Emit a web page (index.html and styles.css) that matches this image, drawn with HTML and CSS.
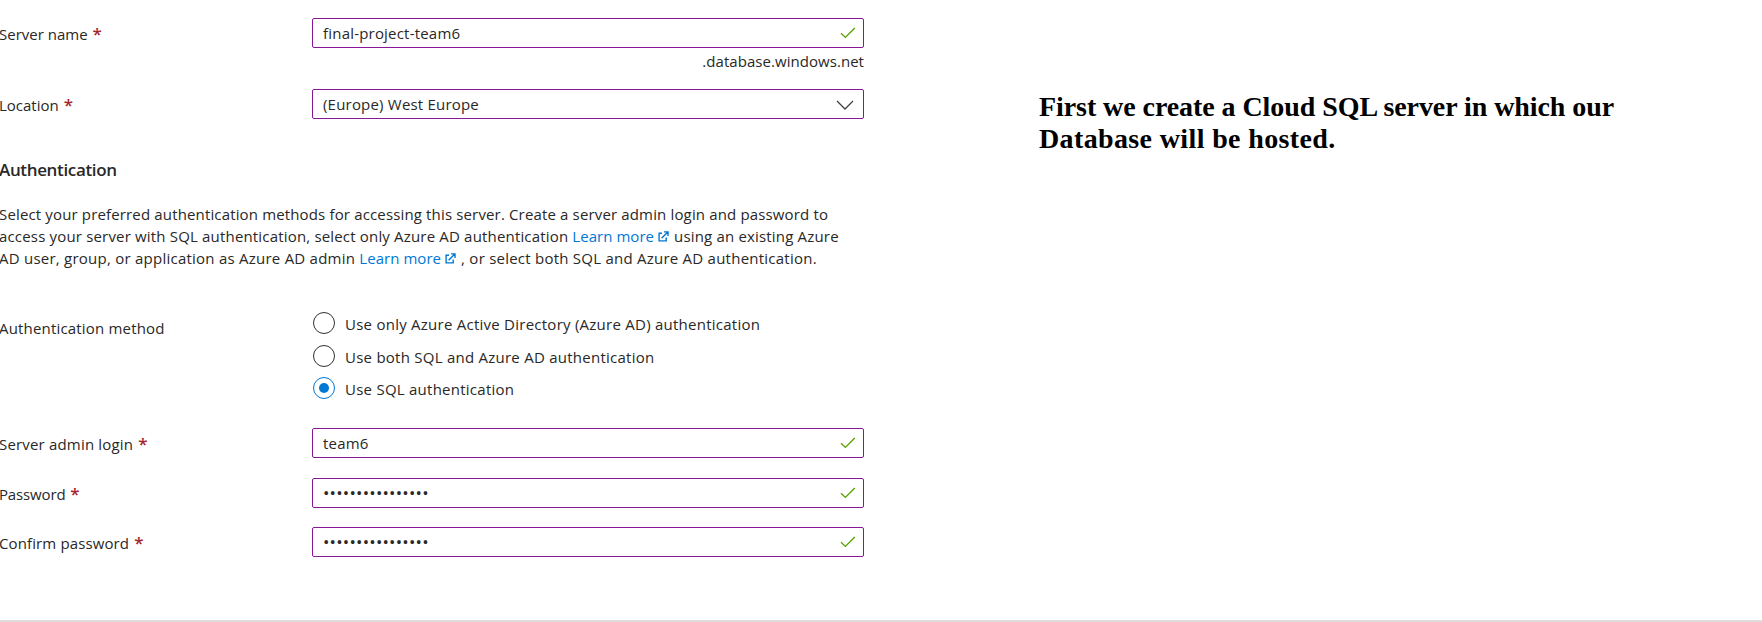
FILE: index.html
```html
<!DOCTYPE html>
<html lang="en">
<head>
<meta charset="utf-8">
<title>Create SQL Database Server</title>
<link rel="stylesheet" href="styles.css">
</head>
<body>
<svg class="defs" width="0" height="0" aria-hidden="true">
  <symbol id="check" viewBox="0 0 16 12"><path d="M1 6.3 5.4 10.4 14.8 1" fill="none" stroke="#57a300" stroke-width="1.4"/></symbol>
  <symbol id="chevron" viewBox="0 0 18 10"><path d="M1 1 9 9 17 1" fill="none" stroke="#44423f" stroke-width="1.3"/></symbol>
  <symbol id="external" viewBox="0 0 11 11"><path d="M4 2.2H1.1V9.9H8.2V6.5M3.6 7.2 9.3 1.5M6 .9H10V5" fill="none" stroke="#0078d4" stroke-width="1.4"/></symbol>
</svg>
<div class="page">
  <main class="form">
    <div class="row server">
      <label class="label">Server name <span class="req">*</span></label>
      <div class="control">
        <div class="field"><span>final-project-team6</span><svg class="check"><use href="#check"/></svg></div>
        <div class="suffix">.database.windows.net</div>
      </div>
    </div>
    <div class="row location">
      <label class="label">Location <span class="req">*</span></label>
      <div class="field select"><span>(Europe) West Europe</span><svg class="chevron"><use href="#chevron"/></svg></div>
    </div>
    <h2 class="heading">Authentication</h2>
    <p class="intro">
      <span class="line l1">Select your preferred authentication methods for accessing this server. Create a server admin login and password to</span>
      <span class="line l2">access your server with SQL authentication, select only Azure AD authentication <a class="link">Learn more <svg class="ext"><use href="#external"/></svg></a> using an existing Azure</span>
      <span class="line l3">AD user, group, or application as Azure AD admin <a class="link">Learn more <svg class="ext"><use href="#external"/></svg></a> , or select both SQL and Azure AD authentication.</span>
    </p>
    <div class="row method">
      <div class="label">Authentication method</div>
      <div class="radios">
        <div class="radio"><i class="dot"></i><span>Use only Azure Active Directory (Azure AD) authentication</span></div>
        <div class="radio"><i class="dot"></i><span>Use both SQL and Azure AD authentication</span></div>
        <div class="radio"><i class="dot on"></i><span>Use SQL authentication</span></div>
      </div>
    </div>
    <div class="row login">
      <label class="label">Server admin login <span class="req">*</span></label>
      <div class="field"><span>team6</span><svg class="check"><use href="#check"/></svg></div>
    </div>
    <div class="row password">
      <label class="label">Password <span class="req">*</span></label>
      <div class="field"><span class="mask">••••••••••••••••</span><svg class="check"><use href="#check"/></svg></div>
    </div>
    <div class="row confirm">
      <label class="label">Confirm password <span class="req">*</span></label>
      <div class="field"><span class="mask">••••••••••••••••</span><svg class="check"><use href="#check"/></svg></div>
    </div>
  </main>
  <aside class="note"><div class="n1">First we create a Cloud SQL server in which our</div><div class="n2">Database will be hosted.</div></aside>
</div>
</body>
</html>
```
FILE: styles.css
```css
* { box-sizing: border-box; }
body { margin: 0; background: #fff; color: #292827; font: 15px/22px "Open Sans", "Noto Sans", sans-serif; }
.defs { display: block; }
.page { display: flex; height: 622px; border-bottom: 2px solid #dedede; overflow: hidden; }
.form { width: 864px; padding-top: 18px; flex: none; }
.row { display: grid; grid-template-columns: 312px 552px; height: 30px; white-space: nowrap; }
.label { padding-top: 5px; margin-left: -1px; }
.req { color: #a4262c; font-size: 17px; font-weight: 600; line-height: 1px; letter-spacing: 0; margin-left: 1px; }
.field { height: 30px; border: 1px solid #881798; border-radius: 2px; padding: 0 7px 0 10px; display: flex; justify-content: space-between; line-height: 28px; letter-spacing: .2px; }
.field .check { margin-top: 8px; }
.check { width: 16px; height: 12px; }
.chevron { width: 18px; height: 10px; margin: 10px 2px 0 0; }
.suffix { text-align: right; margin-top: 2px; letter-spacing: .05px; }
.location { margin-top: 41px; }
.heading { margin: 40px 0 0 -1px; font-size: 17px; font-weight: 600; line-height: 22px; letter-spacing: -.35px; }
.intro { margin: 22px 0 0 -1px; white-space: nowrap; }
.line { display: block; height: 22px; }
.l1 { letter-spacing: .15px; }
.l2 { letter-spacing: .175px; }
.l3 { letter-spacing: .24px; }
.link { color: #0078d4; letter-spacing: .04px; }
.ext { width: 11px; height: 11px; margin-right: 1px; }
.method { margin-top: 43px; height: 87px; }
.method .label { letter-spacing: .18px; }
.radios { display: grid; grid-template-rows: 33px 32px 22px; padding-left: 1px; }
.radio { display: flex; gap: 10px; letter-spacing: .25px; }
.radio span { padding-top: 1px; }
.dot { width: 22px; height: 22px; border: 1px solid #323130; border-radius: 50%; display: grid; place-items: center; }
.on { border-color: #0078d4; }
.on::after { content: ""; width: 10px; height: 10px; border-radius: 50%; background: #0078d4; }
.login { margin-top: 29px; }
.login .label { letter-spacing: .18px; }
.password { margin-top: 20px; }
.password .label { letter-spacing: -.15px; }
.confirm { margin-top: 19px; }
.confirm .label { letter-spacing: .12px; }
.mask { font-size: 17px; letter-spacing: .22px; }
.note { margin: 91px 0 0 175px; color: #000; font: bold 28px/32px "Liberation Serif", serif; white-space: nowrap; }
.n1 { letter-spacing: -.07px; }
.n2 { letter-spacing: .37px; }
```
